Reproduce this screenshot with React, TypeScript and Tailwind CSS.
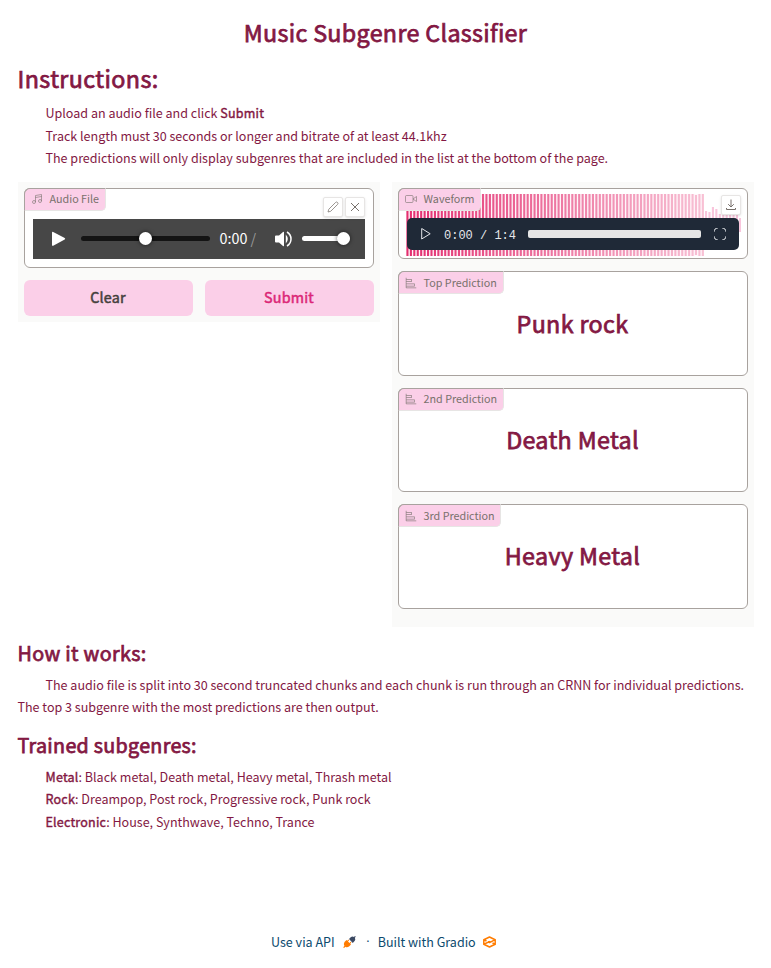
import React from "react";

const bars = Array.from({ length: 87 }, (_, i) => i);
const tail = [17, 16, 21, 19, 14, 14, 14, 14, 14, 14];

function Waveform() {
  return (
    <svg width="340" height="62" viewBox="0 0 340 62" className="block">
      <rect width="298" height="62" fill="#fff0f6" opacity=".6" />
      {bars.map((i) => (
        <rect key={i} x={0.4 + i * 3.435} y={i === 84 ? 1 : 0} width={2.1} height={i === 84 ? 60 : 62} fill="#e11d63" opacity={0.92 - (i / 87) * 0.68} />
      ))}
      {tail.map((h, i) => (
        <rect key={i} x={299 + i * 3.435} y={34 - h} width={2.1} height={h + 4} fill="#f9c5dc" />
      ))}
      <rect x="333" y="24" width="2" height="14" fill="#f9c5dc" />
    </svg>
  );
}

function Chart() {
  return (
    <svg width="12" height="12" viewBox="0 0 32 32" fill="#78716c" opacity=".8">
      <path d="M4 2H2v26a2 2 0 0 0 2 2h26v-2H4v-3h22v-8H4v-4h14V5H4Zm20 17v4H4v-4ZM16 7v4H4V7Z" />
    </svg>
  );
}

function Label({ icon, text, w }: { icon: React.ReactNode; text: string; w: string }) {
  return (
    <div className={`absolute -left-px -top-px z-10 flex h-[23px] items-center rounded-tl-[6px] rounded-br-[5px] border border-[#e7e5e4] border-l-[#a8a29e] border-t-[#a8a29e] bg-[#fbcfe8] pl-[5.500px] text-[10.75px] text-[#78716c] ${w}`}>
      <span className="mb-px mr-[7.100px] flex w-[12px]">{icon}</span>
      <span className="mb-px whitespace-nowrap leading-4">{text}</span>
    </div>
  );
}

const heading = "font-normal [-webkit-text-stroke:0.75px_#831843]";

function Prediction({ label, name, w, h }: { label: string; name: string; w: string; h: string }) {
  return (
    <div className={`relative flex justify-center rounded-[6px] border border-[#a8a29e] bg-white pr-px ${h}`}>
      <Label icon={<Chart />} text={label} w={w} />
      <h2 className={`text-[23.300px] leading-9 tracking-[0.340px] ${heading}`}>{name}</h2>
    </div>
  );
}

const tool = "flex h-5 w-5 items-center justify-center rounded-[2px] border border-[#e7e5e4] bg-white pb-px pr-px text-[#78716c] shadow-sm";
const strong = "font-normal tracking-[0.2px] [-webkit-text-stroke:0.4px_#831843]";

export default function App() {
  return (
    <main className="flex h-[968px] w-[771px] flex-col overflow-hidden bg-white pl-[17.500px] pr-[17.500px] font-['Noto_Sans_CJK_SC',sans-serif] text-[12.540px] text-[#831843]">
      <h1 className={`mt-[14px] text-center text-[23.300px] leading-9 tracking-[0.320px] ${heading}`}>Music Subgenre Classifier</h1>
      <h1 className={`mt-[10px] text-[23.300px] leading-9 tracking-[0.400px] ${heading}`}>Instructions:</h1>
      <div className="mt-[6px] h-[80px] pl-[28px] leading-[22px]">
        <p>Upload an audio file and click <b className={strong}>Submit</b></p>
        <p className="mt-px">Track length must 30 seconds or longer and bitrate of at least 44.1khz</p>
        <p>The predictions will only display subgenres that are included in the list at the bottom of the page.</p>
      </div>
      <div className="ml-[0.500px] flex w-[736px] items-start gap-3">
        <section className="flex h-[140px] w-[362px] flex-col gap-3 bg-[#fafaf9] p-[6px]">
          <div className="relative h-[80px] rounded-[6px] border border-[#a8a29e] bg-white px-2 pt-[8px]">
            <Label w="w-[82px]" text="Audio File" icon={
              <svg width="12" height="12" viewBox="0 0 24 24" fill="none" stroke="#78716c" strokeOpacity=".8" strokeWidth="1.500"><path d="M9 18V5l12-2v13" /><path d="M9 9l12-2" /><circle cx="6" cy="18" r="3" /><circle cx="18" cy="16" r="3" /></svg>
            } />
            <div className="flex h-[22px] justify-end gap-[2px]">
              <span className={tool}><svg width="12" height="12" viewBox="0 0 24 24" fill="none" stroke="currentColor" strokeWidth="1.500"><path d="M17 3a2.830 2.830 0 1 1 4 4L7.500 20.500 2 22l1.500-5.500Z" /></svg></span>
              <span className={tool}><svg width="12" height="12" viewBox="0 0 12 12" fill="none" stroke="currentColor"><path d="m2 2 8 8m0-8-8 8" /></svg></span>
            </div>
            <div className="flex h-[40px] items-center bg-[#474747] pl-[19px] text-white">
              <svg width="14" height="16" viewBox="0 0 14 16" fill="white"><path d="M0 1.500Q0 .3 1.200.9L12.700 7q1 .8 0 1.600L1.200 14.700Q0 15.200 0 14Z" /></svg>
              <div className="mb-px ml-[15px] flex h-[5px] w-[129px] items-center justify-center rounded-full bg-[#141414]"><i className="h-[13px] w-[13px] rounded-full bg-white shadow-[0_0_4px_#000a]" /></div>
              <span className="mb-[2px] ml-[9.500px] w-[55.500px] whitespace-pre text-[14.330px] leading-5">0:00 <span className="text-[#999]">/</span></span>
              <svg width="17" height="16" viewBox="0 0 17 16" fill="white"><path d="M0 5.500q0-1 1-1h3l4-3.600q1-.6 1 .6v13q0 1.200-1 .6L4 11.500H1q-1 0-1-1ZM10.800 3.500q4 4.500 0 9Z" /><path d="M12 1q4 2.500 4 7t-4 7" fill="none" stroke="white" strokeWidth="1.500" /></svg>
              <div className="mb-px ml-[10px] flex h-[5px] w-[48px] items-center justify-end rounded-full bg-white"><i className="h-[13px] w-[13px] rounded-full bg-white shadow-[0_0_4px_#000a]" /></div>
            </div>
          </div>
          <div className="flex gap-3 text-[14.330px] tracking-[0.200px]">
            <button className="h-9 w-[169px] rounded-[6px] bg-[#fbcfe8] pb-[2px] pr-px text-[#44403c] [-webkit-text-stroke:0.500px_#44403c]">Clear</button>
            <button className="h-9 w-[169px] rounded-[6px] bg-[#fbcfe8] pb-[2px] pr-px text-[#db2777] [-webkit-text-stroke:0.500px_#db2777]">Submit</button>
          </div>
        </section>
        <section className="flex h-[445px] w-[362px] flex-col gap-3 bg-[#fafaf9] p-[6px]">
          <div className="relative h-[71px] rounded-[6px] border border-[#a8a29e] bg-white pl-[7px] pt-[5px]">
            <Label w="w-[83px]" text="Waveform" icon={
              <svg width="12" height="12" viewBox="0 0 24 24" fill="none" stroke="#78716c" strokeOpacity=".8" strokeWidth="1.500"><rect x="1" y="5" width="15" height="14" rx="2" /><path d="m23 7-7 5 7 5Z" /></svg>
            } />
            <Waveform />
            <div className="absolute left-[8px] top-[29px] flex h-8 w-[332px] items-center rounded-[5px] bg-[#1f2937] pl-[14px] text-[#e5e7eb]">
              <svg width="10" height="12" viewBox="0 0 10 12" fill="none" stroke="currentColor"><path d="M.7 .5v10.500l8.500-5.250Z" /></svg>
              <span className="ml-[13px] mt-[4px] w-[84px] whitespace-pre font-['Liberation_Mono',monospace] text-[12px] leading-4">0:00 / 1:4</span>
              <div className="h-2 w-[173px] rounded-[2px] bg-[#e5e5e5]" />
              <svg className="ml-[13px]" width="12" height="12" viewBox="0 0 12 12" fill="none" stroke="currentColor"><path d="M.5 3.500v-1a2 2 0 0 1 2-2h1m5 0h1a2 2 0 0 1 2 2v1m0 5v1a2 2 0 0 1-2 2h-1m-5 0h-1a2 2 0 0 1-2-2v-1" /></svg>
            </div>
            <span className={`absolute right-[6px] top-[6px] ${tool}`}><svg width="12" height="12" viewBox="0 0 12 12" fill="none" stroke="currentColor"><path d="M6 .5v7.500M3.200 5.200 6 8l2.800-2.800M1.500 9v1.500h9V9" /></svg></span>
          </div>
          <Prediction label="Top Prediction" name="Punk rock" w="w-[106px] pt-[2px]" h="h-[105px] pt-[33px]" />
          <Prediction label="2nd Prediction" name="Death Metal" w="w-[106px]" h="h-[104px] pt-[32px]" />
          <Prediction label="3rd Prediction" name="Heavy Metal" w="w-[103px] pt-[2px]" h="h-[105px] pt-[32px]" />
        </section>
      </div>
      <h2 className={`mt-[10px] text-[19.700px] leading-8 tracking-[0.350px] ${heading}`}>How it works:</h2>
      <p className="mt-[5px] w-[736px] indent-[28px] leading-[22.400px]">The audio file is split into 30 second truncated chunks and each chunk is run through an CRNN for individual predictions. The top 3 subgenre with the most predictions are then output.</p>
      <h2 className={`mt-[10px] text-[19.700px] leading-8 tracking-[0.300px] ${heading}`}>Trained subgenres:</h2>
      <div className="mt-[5px] pl-[28px] leading-[22.400px]">
        <p><b className={strong}>Metal</b>: Black metal, Death metal, Heavy metal, Thrash metal</p>
        <p><b className={strong}>Rock</b>: Dreampop, Post rock, Progressive rock, Punk rock</p>
        <p><b className={strong}>Electronic</b>: House, Synthwave, Techno, Trance</p>
      </div>
      <footer className="mt-[98px] flex items-center pl-[253.500px] leading-[22px] text-[#0c4a6e]">
        <span>Use via API</span>
        <svg className="ml-[8px]" width="13" height="12" viewBox="0 0 13 12"><path d="m1.500 6 2-2 .8.800L5.500 3.600l.7.700-1.200 1.200 1.500 1.500L7.700 5.800l.7.700-1.200 1.200.8.800-2 2q-2 1.500-3.500.300L1 12l-.8-.7 1.200-1.200Q.2 8 1.500 6Z" fill="#ff7c00" /><path d="m6 3 2-2q1.500-1 3 0l1-1 .8.800-1 1q1 1.500 0 3L9.800 7Z" fill="#3c4963" /></svg>
        <span className="ml-[8px] w-[8px] pl-[2.500px] font-['Open_Sans',sans-serif]">·</span>
        <span className="ml-[6px]">Built with Gradio</span>
        <svg className="ml-[7.500px]" width="13" height="12" viewBox="0 0 13 12" fill="none" stroke="#ff7c00" strokeWidth="1.500" strokeLinejoin="round"><path d="M3.500 5 .8 3.700 6.500 1l5.700 2.700-5.700 2.900L4.800 5.700M9.500 7l2.700 1.300L6.500 11 .8 8.300l5.700-2.700 1.700.8M.8 3.700v4.600M12.200 3.700v4.600" /></svg>
      </footer>
    </main>
  );
}
